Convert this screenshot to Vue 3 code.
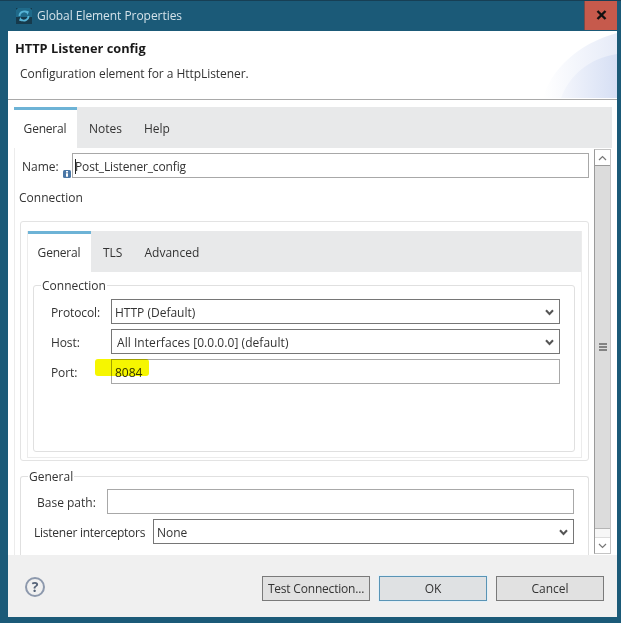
<template>
  <div class="window">
    <div class="titlebar">
      <svg class="logo" width="16" height="16" viewBox="0 0 16 16">
        <rect width="16" height="16" fill="#163a4c" />
        <path d="M2 0H14L16 2V9H0V2Z" fill="#1f6a8a" />
        <path d="M3.500 8A4.500 4.500 0 0 1 11 4.600M12.500 8A4.500 4.500 0 0 1 5 11.400" fill="none" stroke="#57b4d6" stroke-width="1.800" />
        <path d="M9.500 2.500L13 3.500L11.500 7ZM6.500 13.500L3 12.500L4.500 9Z" fill="#57b4d6" />
      </svg>
      <span class="title">Global Element Properties</span>
      <div class="close">
        <svg width="11" height="10" viewBox="0 0 11 10">
          <path d="M1.500 1L9.500 9M9.500 1L1.500 9" stroke="#111" stroke-width="2.400" />
        </svg>
      </div>
    </div>

    <div class="dialog">
      <header class="head">
        <h1>HTTP Listener config</h1>
        <p>Configuration element for a HttpListener.</p>
        <svg class="swoosh" width="74" height="66" viewBox="0 0 74 66">
          <defs>
            <linearGradient id="swa" x1="0" x2="1" y1="0" y2="0">
              <stop offset="0" stop-color="#fff" />
              <stop offset="1" stop-color="#e6ebf8" />
            </linearGradient>
            <linearGradient id="swb" x1="0" x2="1" y1="0" y2="0">
              <stop offset="0" stop-color="#f4f6fc" />
              <stop offset="1" stop-color="#d6dff4" />
            </linearGradient>
          </defs>
          <path d="M0 66C8 38 34 12 74 1V66Z" fill="url(#swa)" />
          <path d="M18 66C26 44 46 26 74 22V66Z" fill="url(#swb)" />
        </svg>
      </header>

      <div class="pane">
        <div class="tabs">
          <div
            v-for="(t, i) in outerTabs"
            :key="t"
            class="tab"
            :class="{ active: i === 0 }"
          >{{ t }}</div>
        </div>

        <div class="pane-body">
          <div class="form">
            <div class="name-row">
              <label class="name-label">Name:</label>
              <svg class="info" width="8" height="8" viewBox="0 0 8 8">
                <rect width="8" height="8" rx="1.500" fill="#4a77a6" />
                <path d="M3 1h2v1.400H3zM3 3.200h2v3.600H3z" fill="#fff" />
              </svg>
              <div class="field name-field"><span class="caret"></span>Post_Listener_config</div>
            </div>

            <div class="section-label">Connection</div>

            <div class="group">
              <div class="folder">
                <div class="tabs">
                  <div
                    v-for="(t, i) in innerTabs"
                    :key="t"
                    class="tab"
                    :class="{ active: i === 0 }"
                  >{{ t }}</div>
                </div>

                <fieldset class="conn">
                  <legend>Connection</legend>
                  <div class="row">
                    <label>Protocol:</label>
                    <div class="field select">
                      <span>HTTP (Default)</span>
                      <svg class="chev" width="9" height="7" viewBox="0 0 9 7"><path d="M1 1.200L4.500 5L8 1.200" fill="none" stroke="#555" stroke-width="2" /></svg>
                    </div>
                  </div>
                  <div class="row">
                    <label>Host:</label>
                    <div class="field select">
                      <span class="host">All Interfaces [0.0.0.0] (default)</span>
                      <svg class="chev" width="9" height="7" viewBox="0 0 9 7"><path d="M1 1.200L4.500 5L8 1.200" fill="none" stroke="#555" stroke-width="2" /></svg>
                    </div>
                  </div>
                  <div class="row">
                    <label>Port:</label>
                    <div class="field text">8084</div>
                    <div class="marker"></div>
                  </div>
                </fieldset>
              </div>
            </div>

            <fieldset class="general">
              <legend>General</legend>
              <div class="row base">
                <label>Base path:</label>
                <div class="field text"></div>
              </div>
              <div class="row listener">
                <label>Listener interceptors</label>
                <div class="field select">
                  <span>None</span>
                  <svg class="chev" width="9" height="7" viewBox="0 0 9 7"><path d="M1 1.200L4.500 5L8 1.200" fill="none" stroke="#555" stroke-width="2" /></svg>
                </div>
              </div>
            </fieldset>
          </div>

          <div class="scrollbar">
            <div class="arrow">
              <svg width="9" height="6" viewBox="0 0 9 6"><path d="M1 5L4.500 1.500L8 5" fill="none" stroke="#777" stroke-width="1.200" /></svg>
            </div>
            <div class="thumb">
              <svg width="8" height="8" viewBox="0 0 8 8"><path d="M0 1H8M0 4H8M0 7H8" stroke="#666" stroke-width="1.500" /></svg>
            </div>
            <div class="gap"></div>
            <div class="arrow down">
              <svg width="9" height="6" viewBox="0 0 9 6"><path d="M1 1L4.500 4.500L8 1" fill="none" stroke="#777" stroke-width="1.200" /></svg>
            </div>
          </div>
        </div>
      </div>

      <footer class="foot">
        <div class="help">?</div>
        <div class="buttons">
          <button class="btn test">Test Connection...</button>
          <button class="btn ok">OK</button>
          <button class="btn">Cancel</button>
        </div>
      </footer>
    </div>
  </div>
</template>

<script setup>
const outerTabs = ['General', 'Notes', 'Help']
const innerTabs = ['General', 'TLS', 'Advanced']
</script>

<style>
html,
body {
  margin: 0;
  background: #1b5a78;
}
</style>

<style scoped>
* {
  box-sizing: border-box;
}
.window {
  width: 621px;
  height: 623px;
  background: #1b5a78;
  border-top: 1px solid #173f55;
  display: flex;
  flex-direction: column;
  font-family: "Open Sans", "Noto Sans CJK KR", sans-serif;
  font-size: 12px;
  color: #333;
  overflow: hidden;
}
.titlebar {
  height: 29px;
  display: flex;
  align-items: center;
  padding-left: 16px;
  flex: none;
}
.logo {
  margin-right: 5px;
  margin-top: 1px;
}
.title {
  color: #d4e2ea;
  font-size: 12px;
  letter-spacing: -0.05px;
}
.close {
  margin-left: auto;
  margin-right: 4px;
  width: 33px;
  height: 30px;
  margin-top: -1px;
  background: #c65a4c;
  border-left: 1px solid #7a4a48;
  display: flex;
  align-items: center;
  justify-content: center;
}
.dialog {
  flex: 1;
  margin: 1px 4px 6px 8px;
  background: #fff;
  display: flex;
  flex-direction: column;
  min-height: 0;
}
.head {
  height: 69px;
  flex: none;
  position: relative;
  border-bottom: 1px solid #a9a9a9;
  padding: 6px 0 0 7px;
  overflow: hidden;
}
.head h1 {
  margin: 0;
  font-size: 12.800px;
  font-weight: 700;
  line-height: 22px;
  color: #1a1a1a;
}
.head p {
  margin: 3px 0 0 5px;
  line-height: 24px;
  letter-spacing: -0.05px;
}
.swoosh {
  position: absolute;
  right: 0;
  bottom: 1px;
}
.pane {
  flex: 1;
  min-height: 0;
  padding: 7px 5px 0 6px;
  display: flex;
  flex-direction: column;
}
.tabs {
  display: flex;
  height: 41px;
  background: #e8e9ea;
  flex: none;
}
.tab {
  padding: 1px 11px 0;
  display: flex;
  align-items: center;
}
.tab.active {
  width: 63px;
  margin-right: 1px;
  justify-content: center;
  padding: 0 1px 2px 0;
  background: #fff;
  border-top: 3px solid #6db3d6;
  letter-spacing: -0.200px;
}
.pane-body {
  flex: 1;
  min-height: 0;
  display: flex;
  overflow: hidden;
  border-left: 1px solid #ececec;
}
.form {
  flex: 1;
  min-width: 0;
  padding: 5px 5px 0;
}
.name-row {
  display: flex;
  height: 25px;
  align-items: center;
}
.name-label {
  margin-left: 2px;
  width: 41px;
  padding-top: 1px;
}
.info {
  align-self: flex-end;
  margin-right: 1px;
}
.field {
  height: 25px;
  border: 1px solid #a8a8a8;
  background: #fff;
  display: flex;
  align-items: center;
  padding-left: 3px;
  padding-top: 1px;
}
.name-field {
  flex: 1;
  padding-left: 2px;
  letter-spacing: -0.150px;
}
.caret {
  width: 1px;
  height: 15px;
  background: #222;
  margin-right: -1px;
}
.section-label {
  margin: 11px 0 0 -1px;
  line-height: 18px;
}
.group {
  margin-top: 14px;
  height: 240px;
  border: 1px solid #e3e3e3;
  border-radius: 3px;
  padding: 9px 6px 2px;
}
.folder {
  height: 100%;
  border: 1px solid #ececec;
  border-top: 0;
}
fieldset {
  margin: 0;
  padding: 0;
  border: 1px solid #e0e0e0;
  border-radius: 3px;
  min-width: 0;
}
legend {
  padding: 2px 1px 0;
  line-height: 16px;
  margin-left: 7px;
}
.conn {
  margin: 4px 6px 0 5px;
  height: 176px;
  padding: 5px 14px 0 0;
}
.row {
  display: flex;
  align-items: center;
  margin-bottom: 5px;
  position: relative;
}
.row label {
  flex: none;
  padding-top: 1px;
}
.conn .row label {
  width: 77px;
  padding-left: 17px;
  letter-spacing: -0.100px;
}
.row .field {
  flex: 1;
}
.select {
  border-color: #767676;
  justify-content: space-between;
  padding-right: 5px;
}
.host {
  margin-left: 2px;
  letter-spacing: 0.050px;
}
.marker {
  position: absolute;
  left: 61px;
  top: 0;
  width: 54px;
  height: 17px;
  background: #f6f600;
  border-radius: 3px;
  mix-blend-mode: multiply;
}
.general {
  margin-top: 6px;
  height: 90px;
  padding: 4px 14px 0 0;
  border-bottom: 0;
  border-radius: 3px 3px 0 0;
}
.general .row.base label {
  width: 86px;
  padding-left: 16px;
}
.general .row.listener label {
  width: 132px;
  padding-left: 13px;
  letter-spacing: -0.250px;
}
.scrollbar {
  width: 17px;
  flex: none;
  margin: 1px 1px 1px 0;
  display: flex;
  flex-direction: column;
  border: 1px solid #c4c4c4;
  border-left-color: #9a9a9a;
}
.arrow {
  height: 15px;
  background: #fff;
  display: flex;
  align-items: center;
  justify-content: center;
  flex: none;
}
.arrow.down {
  height: 16px;
  border-top: 1px solid #ddd;
}
.thumb {
  flex: none;
  height: 364px;
  background: #dcdcdc;
  border-top: 1px solid #9a9a9a;
  border-bottom: 1px solid #b5b5b5;
  display: flex;
  align-items: center;
  justify-content: center;
}
.gap {
  flex: 1;
  background: #f7f7f7;
}
.foot {
  height: 62px;
  flex: none;
  background: #f0f0f0;
  display: flex;
  align-items: flex-start;
  justify-content: space-between;
  padding: 21px 13px 0 17px;
}
.help {
  width: 20px;
  height: 20px;
  margin-top: 1px;
  border: 2px solid #8d99ad;
  border-radius: 50%;
  color: #566479;
  font-weight: 700;
  font-size: 14px;
  line-height: 16px;
  text-align: center;
}
.buttons {
  display: flex;
  gap: 9px;
}
.btn {
  width: 108px;
  height: 25px;
  padding: 0;
  border: 1px solid #7a7a7a;
  background: #e1e1e1;
  font-family: inherit;
  font-size: 12px;
  color: #333;
}
.btn.test {
  letter-spacing: -0.200px;
}
.btn.ok {
  border-color: #5a94b5;
  background: #dfe1e3;
  box-shadow: 0 0 0 1px #e4f0f7;
}
</style>
